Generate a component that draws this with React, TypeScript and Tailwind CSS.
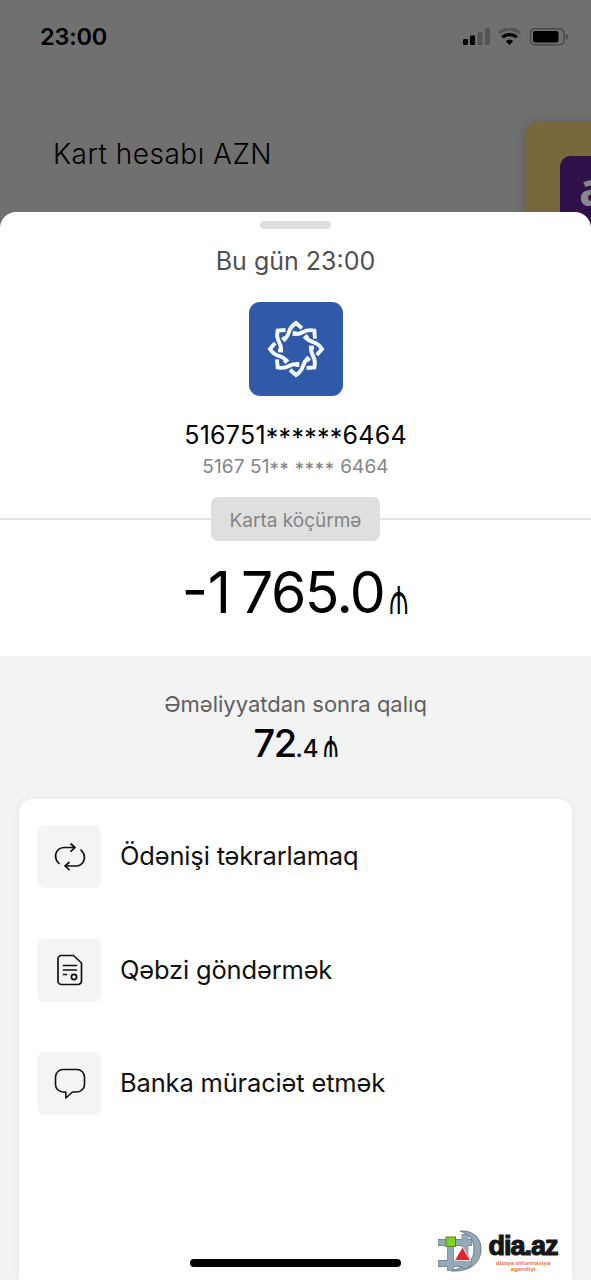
import type { ReactNode } from "react";

const petals = [0, 45, 90, 135, 180, 225, 270, 315];

function StatusIcons() {
  return (
    <svg width="108" height="20" viewBox="0 0 108 20" fill="none">
      <rect x="1" y="11" width="5" height="6" rx="1.3" fill="#000" />
      <rect x="8" y="7.5" width="5" height="9.5" rx="1.3" fill="#000" />
      <rect x="15.5" y="4" width="5" height="13" rx="1.3" fill="#555" />
      <rect x="23" y="0" width="5" height="17" rx="1.3" fill="#555" />
      <path d="M37 5.2a15.500 15.500 0 0 1 21 0" stroke="#555" strokeWidth="3.2" />
      <path d="M40.300 9.400a10.500 10.500 0 0 1 14.400 0" stroke="#000" strokeWidth="3.3" />
      <path d="M47.500 17l-3.700-3.800a5.600 5.600 0 0 1 7.400 0z" fill="#000" />
      <rect x="68.500" y="0.8" width="33.500" height="16" rx="4.200" stroke="#484848" strokeWidth="1.4" />
      <rect x="71" y="3" width="25.500" height="11.500" rx="2" fill="#000" />
      <path d="M103.800 5.800c1.600.8 2.200 1.900 2.200 3s-.6 2.200-2.200 3z" fill="#484848" />
    </svg>
  );
}

function BankLogo() {
  return (
    <div className="flex h-[94px] w-[94px] items-center justify-center rounded-[11px] bg-[#3159a9]">
      <svg width="64" height="64" viewBox="-32 -32 64 64" fill="none" stroke="#f4fbff" strokeWidth="3.900">
        {petals.map((deg) => (
          <path key={deg} transform={`rotate(${deg})`} d="M6 -20.800L0 -26C-4 -23.500 -6 -21 -7.200 -16.500C-8 -13.500 -9 -12 -11.500 -9.500L-13.600 -11.800" />
        ))}
      </svg>
    </div>
  );
}

function RepeatIcon() {
  return (
    <svg width="32" height="32" viewBox="0 0 32 32" fill="none" stroke="#111" strokeWidth="1.7" strokeLinecap="round" strokeLinejoin="round">
      <path d="M5 22.500C-1.500 16 2 6.500 10.500 6.500H20.500M17 3l4 3.500-4 3.700" />
      <path d="M27 9C33.500 15.500 30 25 21.500 25H11.500M15 21.500L11 25l4 3.700" />
    </svg>
  );
}

function ReceiptIcon() {
  return (
    <svg width="32" height="32" viewBox="0 0 32 32" fill="none" stroke="#111" strokeWidth="1.7" strokeLinecap="round" strokeLinejoin="round">
      <path d="M7.500 1.500h12l8 7.500v18a3.500 3.500 0 0 1-3.500 3.500H7.500A3.500 3.500 0 0 1 4 27V5A3.500 3.500 0 0 1 7.500 1.500z" />
      <path d="M9.500 11.500h13M9.500 16h13M9.500 20.500h3" />
      <circle cx="20" cy="23" r="2.600" />
    </svg>
  );
}

function ChatIcon() {
  return (
    <svg width="32" height="32" viewBox="0 0 32 32" fill="none" stroke="#111" strokeWidth="1.6" strokeLinejoin="round">
      <path d="M9 1.500h14a7.500 7.500 0 0 1 7.500 7.500v7.500a7.500 7.500 0 0 1-7.500 7.500h-4.500L11.800 30v-6H9a7.500 7.500 0 0 1-7.500-7.500V9A7.500 7.500 0 0 1 9 1.500z" />
    </svg>
  );
}

function Action({ icon, label }: { icon: ReactNode; label: string }) {
  return (
    <div className="flex items-center gap-[19px]">
      <div className="flex h-[63px] w-[63px] items-center justify-center rounded-md bg-[#f4f4f4]">{icon}</div>
      <span className="pb-px text-[25.500px] leading-8 tracking-[-0.17px] whitespace-nowrap text-[#111]">{label}</span>
    </div>
  );
}

function Watermark() {
  return (
    <div className="absolute top-[1229px] left-[438px] flex">
      <svg width="46" height="44" viewBox="0 0 46 44" fill="none">
        <path d="M22 2C36 1 44 10 43 22 42 34 32 43 13 42 27 38 36 32 36 21 36 11 32 6 22 2z" fill="#94a9b8" stroke="#5b6a77" strokeWidth="0.8" />
        <path d="M0 13.500H34M0 34.500H34M12.500 8V42M27 5V40" stroke="#6d7e8c" strokeWidth="6.800" />
        <path d="M0.500 13.500H33.500M0.500 34.500H33.500M12.500 8V41.500M27 5.500V39.500" stroke="#94a9b8" strokeWidth="5.600" />
        <path d="M24.500 18L32.500 31.500H16.500z" fill="#e5252a" stroke="#fff" strokeWidth="0.8" />
        <rect x="8" y="8" width="9.500" height="9.500" fill="#7fd321" stroke="#4d8a24" strokeWidth="1" />
      </svg>
      <div className="ml-[3px] flex w-[72px] flex-col items-center">
        <span className="font-['Liberation_Sans'] text-[27px] leading-[34px] font-bold tracking-[-1px] whitespace-nowrap text-[#191616] [-webkit-text-stroke:1.2px_#191616]">dia.az</span>
        <span className="-mt-[3px] text-center font-['Liberation_Sans'] text-[6.200px] leading-[6px] font-bold whitespace-nowrap text-[#e87533]">
          dünya informasiya
          <br />
          agentliyi
        </span>
      </div>
    </div>
  );
}

export default function App() {
  return (
    <div className="relative flex h-[1280px] w-[591px] flex-col overflow-hidden bg-[#707070] font-['Inter','Noto_Sans',sans-serif] text-black">
      <header className="relative h-[212px] shrink-0">
        <div className="flex items-start justify-between pt-[22px] pr-[21px] pl-[40px]">
          <span className="text-[23.500px] leading-[30px] font-semibold tracking-[-0.2px]">23:00</span>
          <div className="pt-[6px]">
            <StatusIcons />
          </div>
        </div>
        <h1 className="mt-[84px] pl-[53px] text-[28px] leading-9 font-light tracking-[0.5px] whitespace-nowrap">Kart hesabı AZN</h1>
        <div className="absolute top-[122px] left-[526px] h-[110px] w-[80px] rounded-[12px] bg-[#78673a] shadow-[0_0_14px_rgba(0,0,0,0.18)]">
          <div className="mt-[34px] ml-[34px] h-[80px] w-[60px] rounded-[11px] bg-[#2f1049] pl-[19px] font-['Open_Sans'] text-[46px] leading-[64px] font-bold text-[#888]">a</div>
        </div>
      </header>

      <main className="relative flex flex-1 flex-col rounded-t-[16px] bg-white">
        <section className="flex h-[444px] shrink-0 flex-col items-center">
          <div className="mt-[9px] h-2 w-[71px] rounded-full bg-[#dfdfdf]" />
          <p className="mt-4 text-[25px] leading-8 text-[#505050]">Bu gün 23:00</p>
          <div className="mt-[25px]">
            <BankLogo />
          </div>
          <p className="mt-[23px] text-[25px] leading-8 tracking-[0.25px]">
            516751<span className="relative top-[3px]">******</span>6464
          </p>
          <p className="mt-[4px] text-[19px] leading-6 tracking-[0.1px] text-[#858585]">
            5167 51<span className="relative top-[3px] text-[18px] font-medium tracking-[0.6px]">** ****</span> 6464
          </p>
          <div className="mt-[18px] flex w-full items-center">
            <div className="h-[2px] flex-1 bg-[#e2e2e2]" />
            <div className="flex h-[44px] w-[169px] items-center justify-center rounded-[7px] bg-[#dfdfdf] pt-[4px] text-[19px] text-[#858585]">Karta köçürmə</div>
            <div className="h-[2px] flex-1 bg-[#e2e2e2]" />
          </div>
          <p className="mt-[18px] flex items-baseline pl-[2px] text-[57px] leading-[68px] whitespace-nowrap">
            <span>-1</span>
            <span className="ml-[10px] tracking-[-1.500px]">765.0</span>
            <span className="ml-[2px] w-[25px] origin-[50%_65%] scale-x-[0.84] scale-y-[1.42] text-[36px] leading-[68px] font-light">₼</span>
          </p>
        </section>

        <section className="flex flex-1 flex-col items-center bg-[#f3f3f3]">
          <p className="mt-[34px] text-[22px] leading-7 whitespace-nowrap text-[#606060]">Əməliyyatdan sonra qalıq</p>
          <p className="mt-[3px] flex items-baseline pl-[2px] text-[38px] leading-[44px] font-medium">
            <span className="tracking-[-1.500px]">72</span>
            <span className="text-[24px]">.4</span>
            <span className="ml-[2px] w-[19px] origin-[50%_68%] scale-x-[0.84] scale-y-[1.42] text-[27px] leading-[44px] font-normal">₼</span>
          </p>
          <div className="mt-[28px] flex w-[553px] flex-1 flex-col gap-[50.500px] rounded-t-[14px] bg-white pt-[26px] pl-[19px] shadow-[0_0_10px_rgba(0,0,0,0.06)]">
            <Action icon={<RepeatIcon />} label="Ödənişi təkrarlamaq" />
            <Action icon={<ReceiptIcon />} label="Qəbzi göndərmək" />
            <Action icon={<ChatIcon />} label="Banka müraciət etmək" />
          </div>
        </section>
      </main>

      <Watermark />
      <div className="absolute top-[1259px] left-[190px] h-2 w-[211px] rounded-full bg-black" />
    </div>
  );
}
